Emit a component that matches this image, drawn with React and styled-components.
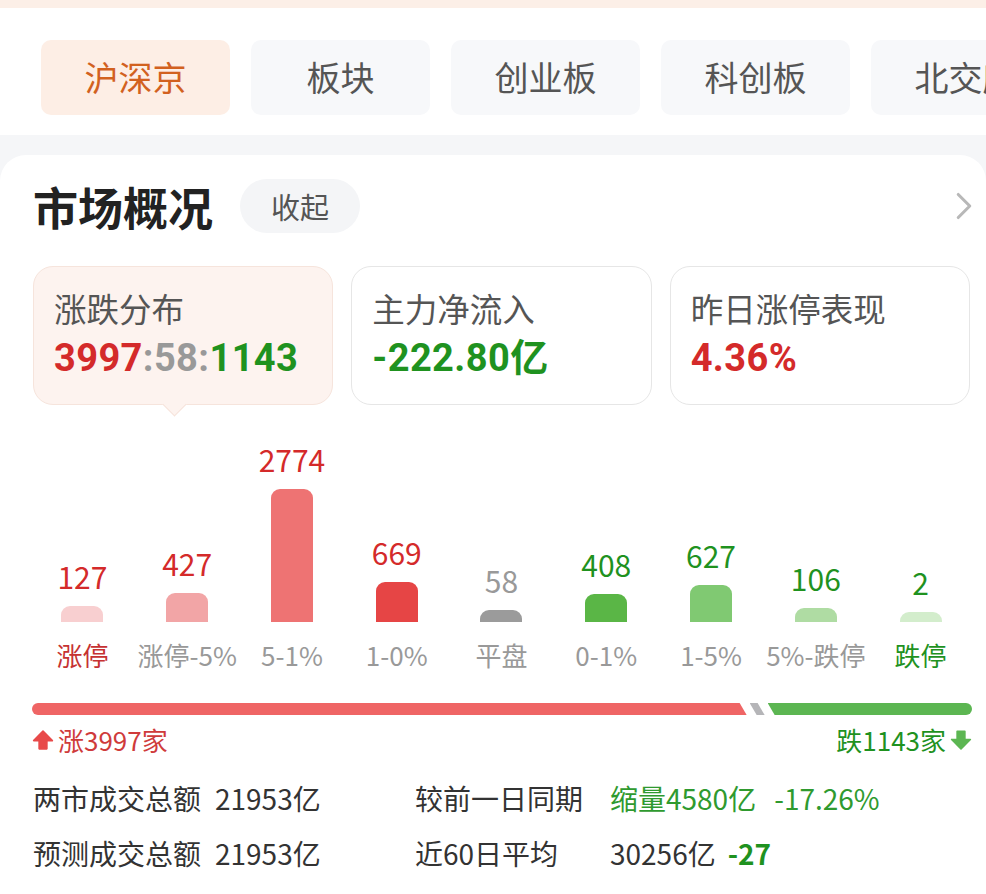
import React from "react";
import styled, { createGlobalStyle } from "styled-components";
import { ChevronRight } from "lucide-react";

const GlobalStyle = createGlobalStyle`
  body {
    margin: 0;
    background: #fff;
    font-family: "Noto Sans CJK SC", "Noto Sans", sans-serif;
    overflow: hidden;
  }
`;

const RED = "#d42a2a";
const GREEN = "#1f921f";

const Page = styled.div`
  width: 986px;
  height: 894px;
  overflow: hidden;
  background: #f5f6f8;
`;

const TopStrip = styled.div`
  height: 8px;
  background: #fcefe7;
`;

const TabBar = styled.div`
  display: flex;
  gap: 21px;
  padding: 32px 0 20px 41px;
  background: #fff;
  overflow: hidden;
`;

const Tab = styled.div`
  flex: 0 0 ${(p) => p.$w}px;
  height: 75px;
  border-radius: 10px;
  display: flex;
  align-items: center;
  justify-content: center;
  font-size: 34px;
  padding-bottom: 3px;
  box-sizing: border-box;
  white-space: nowrap;
  background: ${(p) => (p.$active ? "#fdeee5" : "#f7f8fa")};
  color: ${(p) => (p.$active ? "#d2611f" : "#555")};
`;

const Card = styled.div`
  margin-top: 20px;
  background: #fff;
  border-radius: 26px 26px 0 0;
  padding: 23px 16px 0 33px;
  height: 720px;
`;

const Header = styled.div`
  display: flex;
  align-items: center;
  height: 56px;
`;

const Title = styled.h1`
  margin: 0;
  font-size: 45px;
  font-weight: 700;
  color: #222;
`;

const Pill = styled.div`
  margin-left: 27px;
  height: 54px;
  padding: 0 31px;
  border-radius: 27px;
  background: #f4f5f7;
  color: #555;
  font-size: 29px;
  display: flex;
  align-items: center;
`;

const More = styled.div`
  margin-left: auto;
  margin-right: -17px;
  color: #b8b8b8;
  display: flex;
`;

const InfoRow = styled.div`
  display: grid;
  grid-template-columns: repeat(3, 1fr);
  gap: 18px;
  margin-top: 32px;
`;

const Info = styled.div`
  position: relative;
  height: 139px;
  box-sizing: border-box;
  border-radius: 20px;
  padding: 19px 20px 0 20px;
  background: ${(p) => (p.$active ? "#fdf3ef" : "#fff")};
  border: 1.5px solid ${(p) => (p.$active ? "#f6e4dc" : "#e6e6e6")};
`;

const Pointer = styled.div`
  position: absolute;
  left: 132px;
  bottom: -9px;
  width: 16px;
  height: 16px;
  background: #fdf3ef;
  transform: rotate(45deg);
  border-right: 1.5px solid #f6e4dc;
  border-bottom: 1.5px solid #f6e4dc;
`;

const InfoLabel = styled.div`
  font-size: 32.5px;
  line-height: 44px;
  color: #555;
`;

const InfoValue = styled.div`
  margin-top: 4px;
  font-family: Roboto, "Noto Sans CJK SC", sans-serif;
  font-size: 38px;
  line-height: 48px;
  font-weight: 700;
  letter-spacing: 0.4px;
  color: ${(p) => p.$color || "#333"};
`;

const Part = styled.span`
  color: ${(p) => p.$color};
`;

const Chart = styled.div`
  display: grid;
  grid-template-columns: repeat(9, 1fr);
  margin: 36px -3px 0 -3px;
`;

const Column = styled.div`
  display: flex;
  flex-direction: column;
  align-items: center;
  justify-content: flex-end;
`;

const Count = styled.div`
  font-size: 30px;
  line-height: 36px;
  margin-bottom: 12px;
  color: ${(p) => p.$color};
`;

const Bar = styled.div`
  width: 42px;
  border-radius: 9px 9px 0 0;
  background: ${(p) => p.$color};
`;

const BarLabel = styled.div`
  margin-top: 16px;
  font-size: 26px;
  line-height: 34px;
  white-space: nowrap;
  color: ${(p) => p.$color || "#999"};
`;

const Ratio = styled.div`
  display: flex;
  gap: 3px;
  height: 12px;
  margin-top: 31px;
  margin-right: -2px;
  margin-left: -1px;
  border-radius: 6px;
  overflow: hidden;
`;

const Seg = styled.div`
  flex: ${(p) => p.$flex};
  background: ${(p) => p.$color};
  clip-path: ${(p) => p.$clip};
`;

const RatioLegend = styled.div`
  display: flex;
  justify-content: space-between;
  margin-top: 8px;
  margin-right: -2px;
  margin-left: -1px;
  font-size: 26px;
  line-height: 34px;
`;

const Legend = styled.div`
  display: flex;
  align-items: center;
  gap: 4px;
  color: ${(p) => p.$color};
`;

const Stats = styled.div`
  display: grid;
  grid-template-columns: 182px 200px 195px 1fr;
  margin-top: 14px;
  font-size: 28px;
  line-height: 55px;
  color: #333;
  white-space: nowrap;
`;

const StatValue = styled.div`
  color: ${(p) => p.$color || "#333"};
  span {
    margin-left: 18px;
  }
`;

const Strong = styled.b`
  font-weight: 700;
  margin-left: 12px;
  color: ${GREEN};
`;

const Arrow = ({ color, down }) => (
  <svg width="22" height="22" viewBox="0 0 20 20" style={{ transform: down ? "rotate(180deg)" : "none" }}>
    <path d="M10 2 L18.5 10.5 H13.5 V18 H6.5 V10.5 H1.5 Z" fill={color} stroke={color} strokeWidth="1.5" strokeLinejoin="round" />
  </svg>
);

const bars = [
  { n: 127, h: 16, c: "#f8cfd0", t: "涨停", tc: "#c63232", nc: RED },
  { n: 427, h: 29, c: "#f2a5a6", t: "涨停-5%", nc: RED },
  { n: 2774, h: 133, c: "#ee7373", t: "5-1%", nc: RED },
  { n: 669, h: 40, c: "#e64545", t: "1-0%", nc: RED },
  { n: 58, h: 12, c: "#9b9b9b", t: "平盘", nc: "#999" },
  { n: 408, h: 28, c: "#5ab646", t: "0-1%", nc: GREEN },
  { n: 627, h: 37, c: "#80c972", t: "1-5%", nc: GREEN },
  { n: 106, h: 14, c: "#afdca3", t: "5%-跌停", nc: GREEN },
  { n: 2, h: 10, c: "#d3edcc", t: "跌停", tc: GREEN, nc: GREEN },
];

const tabs = [
  { t: "沪深京", w: 189 },
  { t: "板块", w: 179 },
  { t: "创业板", w: 189 },
  { t: "科创板", w: 189 },
  { t: "北交所", w: 189 },
];

export default function App() {
  return (
    <Page>
      <GlobalStyle />
      <TopStrip />
      <TabBar>
        {tabs.map((t, i) => (
          <Tab key={t.t} $w={t.w} $active={i === 0}>{t.t}</Tab>
        ))}
      </TabBar>
      <Card>
        <Header>
          <Title>市场概况</Title>
          <Pill>收起</Pill>
          <More><ChevronRight size={46} strokeWidth={1.6} /></More>
        </Header>
        <InfoRow>
          <Info $active>
            <InfoLabel>涨跌分布</InfoLabel>
            <InfoValue>
              <Part $color={RED}>3997</Part>
              <Part $color="#999">:58:</Part>
              <Part $color={GREEN}>1143</Part>
            </InfoValue>
            <Pointer />
          </Info>
          <Info>
            <InfoLabel>主力净流入</InfoLabel>
            <InfoValue $color={GREEN}>-222.80亿</InfoValue>
          </Info>
          <Info>
            <InfoLabel>昨日涨停表现</InfoLabel>
            <InfoValue $color={RED}>4.36%</InfoValue>
          </Info>
        </InfoRow>
        <Chart>
          {bars.map((b) => (
            <Column key={b.t}>
              <Count $color={b.nc}>{b.n}</Count>
              <Bar $color={b.c} style={{ height: b.h }} />
              <BarLabel $color={b.tc}>{b.t}</BarLabel>
            </Column>
          ))}
        </Chart>
        <Ratio>
          <Seg $flex="3997 1 0" $color="#ef6565" $clip="polygon(0 0, calc(100% - 7px) 0, 100% 100%, 0 100%)" />
          <Seg $flex="0 0 15px" $color="#b5b5b8" $clip="polygon(0 0, calc(100% - 7px) 0, 100% 100%, 7px 100%)" />
          <Seg $flex="1143 1 0" $color="#5cb652" $clip="polygon(0 0, 100% 0, 100% 100%, 7px 100%)" />
        </Ratio>
        <RatioLegend>
          <Legend $color="#cf3b3b"><Arrow color="#e84a4a" />涨3997家</Legend>
          <Legend $color={GREEN}>跌1143家<Arrow color="#5cb652" down /></Legend>
        </RatioLegend>
        <Stats>
          <div>两市成交总额</div>
          <StatValue>21953亿</StatValue>
          <div>较前一日同期</div>
          <StatValue $color="#2f9a2f">缩量4580亿<span>-17.26%</span></StatValue>
          <div>预测成交总额</div>
          <StatValue>21953亿</StatValue>
          <div>近60日平均</div>
          <StatValue>30256亿<Strong>-27</Strong></StatValue>
        </Stats>
      </Card>
    </Page>
  );
}
